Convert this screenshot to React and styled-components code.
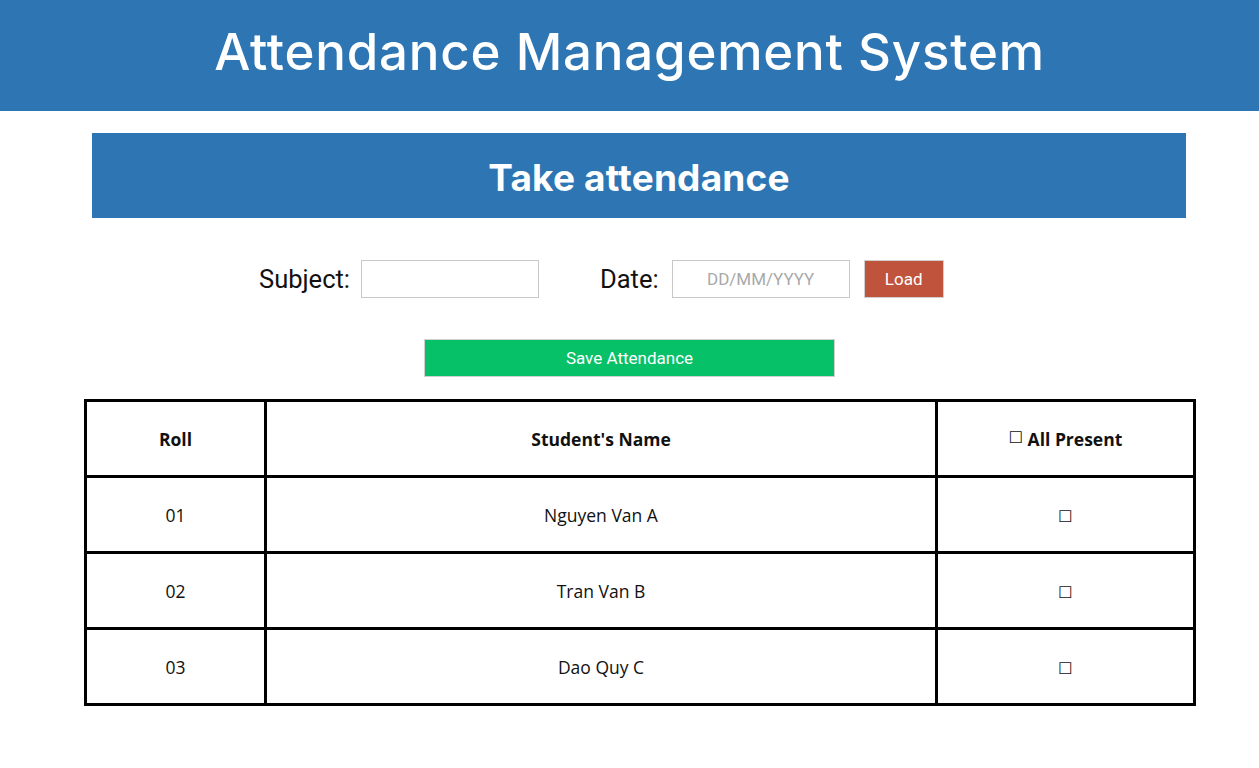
import React from 'react';
import styled, { createGlobalStyle } from 'styled-components';

const GlobalStyle = createGlobalStyle`
  html, body {
    margin: 0;
    padding: 0;
    background: #ffffff;
  }
  body {
    font-family: "Open Sans", "DejaVu Sans", sans-serif;
  }
`;

const Page = styled.div`
  width: 1259px;
  min-height: 768px;
  display: flex;
  flex-direction: column;
  align-items: flex-start;
`;

const Header = styled.header`
  width: 100%;
  height: 111px;
  background: #2e75b3;
  display: flex;
  align-items: center;
  justify-content: center;
`;

const Title = styled.h1`
  margin: 0;
  color: #ffffff;
  font-family: "Inter", "Liberation Sans", sans-serif;
  font-weight: 500;
  font-size: 51px;
  letter-spacing: 0.8px;
  padding-bottom: 8px;
`;

const Banner = styled.div`
  margin: 22px 0 0 92px;
  width: 1094px;
  height: 85px;
  background: #2e75b3;
  display: flex;
  align-items: center;
  justify-content: center;
`;

const BannerText = styled.h2`
  margin: 0;
  padding-top: 4px;
  color: #ffffff;
  font-family: "Inter", "Liberation Sans", sans-serif;
  font-weight: 700;
  font-size: 37px;
  letter-spacing: 0.2px;
`;

const FormRow = styled.div`
  margin: 42px 0 0 259px;
  display: flex;
  align-items: center;
`;

const Label = styled.label`
  font-family: "Roboto", "Liberation Sans", sans-serif;
  font-size: 25.5px;
  color: #111;
  margin-right: ${({ gap }) => gap}px;
`;

const TextInput = styled.input`
  box-sizing: border-box;
  width: 178px;
  height: 38px;
  border: 1px solid #c8c8c8;
  background: #fff;
  font-family: "Roboto", "Liberation Sans", sans-serif;
  font-size: 17px;
  text-align: center;
  color: #222;
  outline: none;
  margin-right: ${({ after }) => after}px;
  &::placeholder {
    color: #a9a9a9;
  }
`;

const LoadButton = styled.button`
  box-sizing: border-box;
  width: 80px;
  height: 38px;
  background: #c0533b;
  border: 1px solid #cfcfcf;
  color: #fff;
  font-family: "Roboto", "Liberation Sans", sans-serif;
  font-size: 17px;
  cursor: pointer;
`;

const SaveButton = styled.button`
  box-sizing: border-box;
  margin: 41px 0 0 424px;
  width: 411px;
  height: 38px;
  background: #06c167;
  border: 1px solid #d0d0d0;
  color: #fff;
  font-family: "Roboto", "Liberation Sans", sans-serif;
  font-size: 17px;
  cursor: pointer;
`;

const Table = styled.table`
  margin: 22px 0 0 84px;
  width: 1109px;
  border-collapse: collapse;
  table-layout: fixed;
  font-family: "Open Sans", "DejaVu Sans", sans-serif;
  font-size: 17.5px;
  color: #111;
`;

const Cell = styled.td`
  border: 3px solid #000;
  height: 73px;
  text-align: center;
  vertical-align: middle;
  font-weight: ${({ head }) => (head ? 700 : 400)};
  padding: 0;
`;

const Box = styled.span`
  font-family: "DejaVu Sans", sans-serif;
  font-weight: 400;
  font-size: 16px;
  position: relative;
  top: ${({ up }) => up}px;
`;

const students = [
  { roll: '01', name: 'Nguyen Van A' },
  { roll: '02', name: 'Tran Van B' },
  { roll: '03', name: 'Dao Quy C' },
];

export default function App() {
  return (
    <>
      <GlobalStyle />
      <Page>
        <Header>
          <Title>Attendance Management System</Title>
        </Header>
        <Banner>
          <BannerText>Take attendance</BannerText>
        </Banner>
        <FormRow>
          <Label gap={11}>Subject:</Label>
          <TextInput type="text" after={61} />
          <Label gap={13}>Date:</Label>
          <TextInput type="text" placeholder="DD/MM/YYYY" after={14} />
          <LoadButton>Load</LoadButton>
        </FormRow>
        <SaveButton>Save Attendance</SaveButton>
        <Table>
          <colgroup>
            <col style={{ width: 180 }} />
            <col style={{ width: 671 }} />
            <col style={{ width: 258 }} />
          </colgroup>
          <tbody>
            <tr>
              <Cell head>Roll</Cell>
              <Cell head>Student's Name</Cell>
              <Cell head>
                <Box up={-3}>☐</Box> All Present
              </Cell>
            </tr>
            {students.map((s) => (
              <tr key={s.roll}>
                <Cell>{s.roll}</Cell>
                <Cell>{s.name}</Cell>
                <Cell>
                  <Box up={0}>☐</Box>
                </Cell>
              </tr>
            ))}
          </tbody>
        </Table>
      </Page>
    </>
  );
}
